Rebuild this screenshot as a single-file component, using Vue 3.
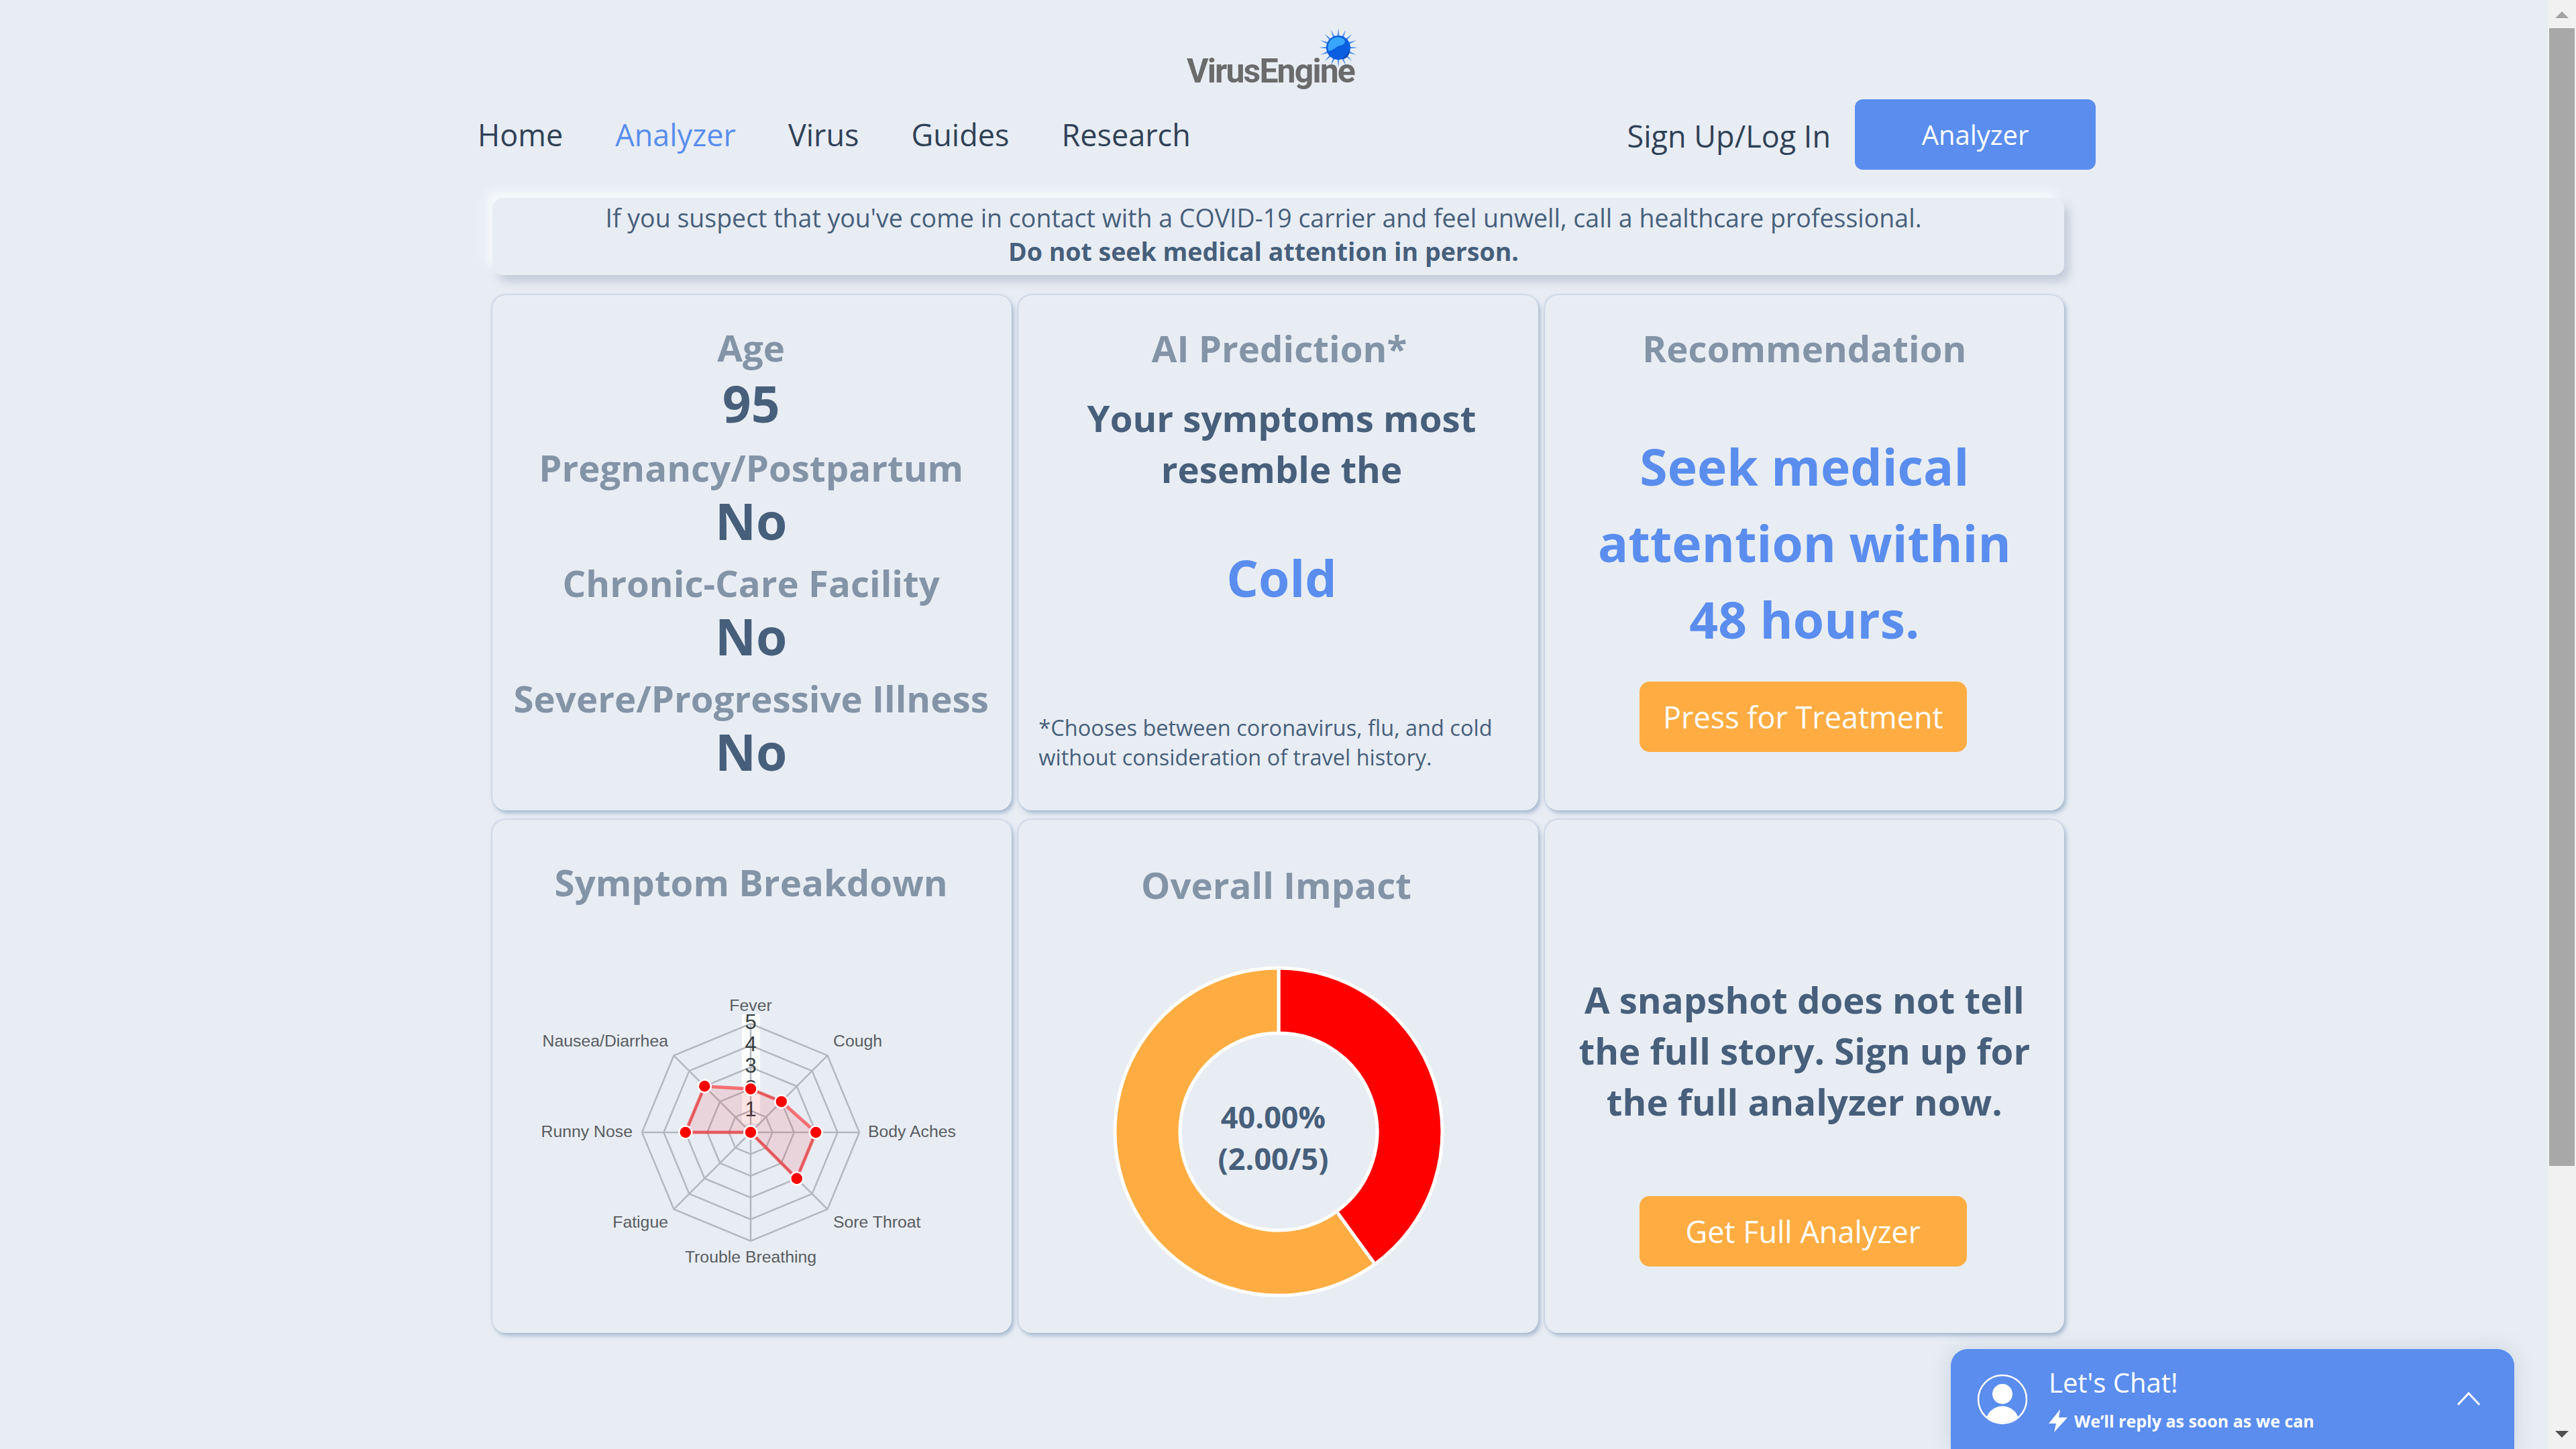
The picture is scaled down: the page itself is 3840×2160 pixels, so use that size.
<template>
  <div class="screen">
    <div class="page">
      <div class="logo-row">
        <div class="logo">
          <span class="logo-text">VirusEngine</span>
          <svg class="logo-ball" viewBox="0 0 64 64" width="64" height="64">
            <polygon v-for="s in spikes" :key="s.points" :points="s.points" fill="#4f8ff0" />
            <circle cx="32" cy="32" r="18" fill="#0a5ee0" />
            <path d="M17.5 37 A15 15 0 0 1 40 19 C44 23 41 28 35 29 C28 30 26 36 17.5 37 Z" fill="#38a5ff" />
            <path d="M36 49 C43 47 48 41 49 33 C50 43 44 50 36 49 Z" fill="#0742a8" />
          </svg>
        </div>
      </div>

      <nav class="nav">
        <div class="nav-links">
          <a v-for="item in links" :key="item" :class="['nav-link', { active: item === 'Analyzer' }]">{{ item }}</a>
        </div>
        <div class="nav-right">
          <a class="signin">Sign Up/Log In</a>
          <button class="btn-blue">Analyzer</button>
        </div>
      </nav>

      <div class="alert">
        <div>If you suspect that you've come in contact with a COVID-19 carrier and feel unwell, call a healthcare professional.</div>
        <div class="alert-strong">Do not seek medical attention in person.</div>
      </div>

      <div class="grid">
        <div class="card card-info">
          <div v-for="row in info" :key="row.label" class="info-row">
            <div class="info-label">{{ row.label }}</div>
            <div class="info-value">{{ row.value }}</div>
          </div>
        </div>

        <div class="card card-predict">
          <h4 class="title">AI Prediction*</h4>
          <div class="resemble">Your symptoms most<br />resemble the</div>
          <div class="result">Cold</div>
          <p class="footnote">*Chooses between coronavirus, flu, and cold<br />without consideration of travel history.</p>
        </div>

        <div class="card card-reco">
          <h4 class="title">Recommendation</h4>
          <div class="reco-text">Seek medical<br />attention within<br />48 hours.</div>
          <button class="btn-orange">Press for Treatment</button>
        </div>

        <div class="card card-radar">
          <h4 class="title">Symptom Breakdown</h4>
          <svg class="radar" viewBox="0 0 774 500" width="774" height="500">
            <rect x="372" y="112" width="27" height="163" fill="#fff" opacity="0.9" />
            <polygon v-for="r in rings" :key="r" :points="ringPoints(r)" fill="none" stroke="#b3b8c0" stroke-width="2.5" />
            <line v-for="(p, i) in axes" :key="i" :x1="cx" :y1="cy" :x2="p.x" :y2="p.y" stroke="#b3b8c0" stroke-width="2.5" />
            <text v-for="t in ticks" :key="t.v" :x="cx" :y="t.y" class="tick" text-anchor="middle" dominant-baseline="central">{{ t.v }}</text>
            <polygon :points="dataPoints" fill="rgba(255,0,0,0.1)" stroke="rgba(255,0,0,0.5)" stroke-width="5" />
            <circle v-for="(p, i) in dataDots" :key="i" :cx="p.x" :cy="p.y" r="9.5" fill="#f00" stroke="#fff" stroke-width="2.5" />
            <text v-for="l in radarLabels" :key="l.text" :x="l.x" :y="l.y" :text-anchor="l.anchor" class="axis-label" dominant-baseline="central">{{ l.text }}</text>
          </svg>
        </div>

        <div class="card card-donut">
          <h4 class="title">Overall Impact</h4>
          <svg class="donut" viewBox="0 0 774 520" width="774" height="520">
            <path :d="arcPath(0, 0.4)" fill="#f00" stroke="#fff" stroke-width="5" />
            <path :d="arcPath(0.4, 1)" fill="#ffad42" stroke="#fff" stroke-width="5" />
            <text x="380" y="227" class="donut-text" text-anchor="middle" dominant-baseline="central">40.00%</text>
            <text x="380" y="289" class="donut-text" text-anchor="middle" dominant-baseline="central">(2.00/5)</text>
          </svg>
        </div>

        <div class="card card-signup">
          <div class="signup-text">A snapshot does not tell<br />the full story. Sign up for<br />the full analyzer now.</div>
          <button class="btn-orange">Get Full Analyzer</button>
        </div>
      </div>

      <div class="chat">
        <svg class="chat-avatar" viewBox="0 0 76 76" width="76" height="76">
          <defs>
            <clipPath id="avatar-clip"><circle cx="38" cy="38" r="35" /></clipPath>
          </defs>
          <circle cx="38" cy="38" r="36" fill="none" stroke="#fff" stroke-width="2.5" />
          <circle cx="38" cy="30" r="15" fill="#fff" />
          <circle cx="38" cy="73" r="25" fill="#fff" clip-path="url(#avatar-clip)" />
        </svg>
        <div class="chat-body">
          <div class="chat-title">Let's Chat!</div>
          <div class="chat-sub">
            <svg viewBox="0 0 28 34" width="28" height="34">
              <path d="M17 0 L0 21 L11 21 L8 34 L28 12 L15 12 Z" fill="#fff" />
            </svg>
            <span>We’ll reply as soon as we can</span>
          </div>
        </div>
        <svg class="chat-chevron" viewBox="0 0 36 22" width="36" height="22">
          <path d="M2 20 L18 3 L34 20" fill="none" stroke="#fff" stroke-width="3" />
        </svg>
      </div>
    </div>

    <div class="scrollbar">
      <div class="arrow-up"></div>
      <div class="thumb"></div>
      <div class="arrow-down"></div>
    </div>
  </div>
</template>

<script setup>
const links = ['Home', 'Analyzer', 'Virus', 'Guides', 'Research']

const info = [
  { label: 'Age', value: '95' },
  { label: 'Pregnancy/Postpartum', value: 'No' },
  { label: 'Chronic-Care Facility', value: 'No' },
  { label: 'Severe/Progressive Illness', value: 'No' }
]

// logo spikes, tapered to a point
const spikes = Array.from({ length: 16 }, (_, i) => {
  const a = (i / 16) * Math.PI * 2
  const at = (r, off) => `${32 + Math.cos(a + off) * r},${32 + Math.sin(a + off) * r}`
  return { points: `${at(17, -0.09)} ${at(29, 0)} ${at(17, 0.09)}` }
})

// radar chart
const cx = 385
const cy = 288
const step = 32.4
const rings = [1, 2, 3, 4, 5]
const scores = [2, 2, 3, 3, 0, 0, 3, 3]

const point = (i, v) => {
  const a = (i / 8) * Math.PI * 2
  return { x: cx + Math.sin(a) * v * step, y: cy - Math.cos(a) * v * step }
}
const toAttr = (list) => list.map((p) => `${p.x},${p.y}`).join(' ')
const ringPoints = (r) => toAttr(scores.map((_, i) => point(i, r)))
const axes = scores.map((_, i) => point(i, 5))
const dataDots = scores.map((v, i) => point(i, v))
const dataPoints = toAttr(dataDots)

const ticks = [
  { v: 5, y: 123 },
  { v: 4, y: 156 },
  { v: 3, y: 188 },
  { v: 2, y: 221 },
  { v: 1, y: 253 }
]

const radarLabels = [
  { text: 'Fever', x: 385, y: 98, anchor: 'middle' },
  { text: 'Cough', x: 508, y: 151, anchor: 'start' },
  { text: 'Body Aches', x: 560, y: 286, anchor: 'start' },
  { text: 'Sore Throat', x: 508, y: 421, anchor: 'start' },
  { text: 'Trouble Breathing', x: 385, y: 473, anchor: 'middle' },
  { text: 'Fatigue', x: 262, y: 421, anchor: 'end' },
  { text: 'Runny Nose', x: 209, y: 286, anchor: 'end' },
  { text: 'Nausea/Diarrhea', x: 262, y: 151, anchor: 'end' }
]

// donut chart
const arcPath = (from, to) => {
  const dx = 388
  const dy = 250
  const R = 244
  const r = 147
  const a0 = from * Math.PI * 2
  const a1 = to * Math.PI * 2
  const pt = (rad, a) => `${dx + Math.sin(a) * rad} ${dy - Math.cos(a) * rad}`
  const large = to - from > 0.5 ? 1 : 0
  return `M${pt(R, a0)} A${R} ${R} 0 ${large} 1 ${pt(R, a1)} L${pt(r, a1)} A${r} ${r} 0 ${large} 0 ${pt(r, a0)} Z`
}
</script>

<style>
html,
body {
  margin: 0;
  background: #e8edf4;
}
</style>

<style scoped>
.screen {
  display: flex;
  width: 3840px;
  height: 2160px;
  overflow: hidden;
  background: #e8edf4;
  font-family: "Open Sans", "Noto Sans", sans-serif;
  color: #475f7b;
}

.page {
  position: relative;
  width: 3798px;
  height: 2160px;
  padding-left: 712px;
  box-sizing: border-box;
}

.logo-row {
  height: 148px;
  width: 2364px;
  display: flex;
  justify-content: center;
  align-items: flex-start;
}

.logo {
  position: relative;
  padding-top: 76px;
}

.logo-text {
  display: block;
  font-family: Roboto, "Liberation Sans", sans-serif;
  font-weight: 700;
  font-size: 50px;
  line-height: 60px;
  letter-spacing: -1.9px;
  color: #6b6b6b;
}

.logo-ball {
  position: absolute;
  top: 39px;
  right: -8px;
}

.nav {
  display: flex;
  justify-content: space-between;
  align-items: center;
  width: 2412px;
  height: 105px;
}

.nav-links {
  display: flex;
  gap: 78px;
  font-size: 45px;
  color: #304156;
}

.nav-link.active {
  color: #5a8dee;
}

.nav-right {
  display: flex;
  align-items: center;
  gap: 36px;
}

.signin {
  font-size: 45px;
  color: #304156;
  padding-top: 4px;
}

.btn-blue {
  width: 359px;
  height: 105px;
  border: none;
  border-radius: 12px;
  background: #5a8dee;
  color: #fff;
  font-family: inherit;
  font-size: 40px;
}

.alert {
  margin: 42px 0 0 22px;
  width: 2343px;
  height: 115px;
  box-sizing: border-box;
  padding: 5px 44px 0 0;
  border-radius: 15px;
  text-align: center;
  font-size: 37.5px;
  line-height: 50px;
  background: #e8edf4;
  box-shadow: -10px -10px 14px #f5f8fa, 8px 10px 14px #c3ccda;
}

.alert-strong {
  font-weight: 700;
}

.grid {
  display: grid;
  grid-template-columns: repeat(3, 1fr);
  grid-template-rows: 768px 765px;
  gap: 14px 10px;
  margin: 30px 0 0 22px;
  width: 2343px;
}

.card {
  display: flex;
  flex-direction: column;
  align-items: center;
  box-sizing: border-box;
  border-radius: 20px;
  background: #e8edf4;
  box-shadow: 3px 4px 6px rgba(110, 140, 175, 0.55), -1px -1px 3px rgba(130, 155, 185, 0.35);
}

.title {
  margin: 0;
  font-size: 54.6px;
  line-height: 76px;
  font-weight: 700;
  color: #8494a7;
}

.card-info {
  padding: 42px 3px 0 0;
}

.info-row {
  display: flex;
  flex-direction: column;
  align-items: center;
  margin-bottom: 14px;
}

.info-row:first-child {
  margin-bottom: 17px;
}

.info-row:first-child .info-label {
  margin-bottom: 4px;
}

.info-label {
  font-size: 54.6px;
  line-height: 72px;
  font-weight: 700;
  color: #8494a7;
}

.info-value {
  font-size: 75px;
  line-height: 86px;
  font-weight: 700;
}

.card-predict {
  padding-top: 41px;
}

.card-predict .title {
  margin-left: 3px;
}

.resemble {
  margin: 28px 0 0 10px;
  font-size: 54.6px;
  line-height: 76px;
  font-weight: 700;
  text-align: center;
}

.result {
  margin: 69px 0 0 10px;
  font-size: 75px;
  line-height: 110px;
  font-weight: 700;
  color: #5a8dee;
}

.footnote {
  margin: auto 0 0;
  padding: 0 20px 57px 30px;
  width: 100%;
  box-sizing: border-box;
  font-size: 32.5px;
  line-height: 44px;
}

.card-reco {
  padding-top: 41px;
}

.reco-text {
  margin-top: 81px;
  font-size: 75px;
  line-height: 114px;
  font-weight: 700;
  text-align: center;
  color: #5a8dee;
}

.btn-orange {
  width: 488px;
  height: 105px;
  margin-right: 4px;
  border: none;
  border-radius: 15px;
  background: #ffad42;
  color: #fff;
  font-family: inherit;
  font-size: 45px;
}

.card-reco .btn-orange {
  margin-top: 36px;
}

.card-radar {
  padding-top: 55px;
}

.card-radar .title {
  margin-right: 3px;
}

.radar {
  margin-top: 47px;
}

.tick {
  font-family: "Liberation Sans", sans-serif;
  font-size: 31px;
  fill: #373d3f;
}

.axis-label {
  font-family: "Liberation Sans", sans-serif;
  font-size: 24.8px;
  fill: #595c60;
}

.card-donut {
  padding-top: 59px;
}

.card-donut .title {
  margin-right: 6px;
}

.donut {
  margin-top: 80px;
}

.donut-text {
  font-family: "Open Sans", sans-serif;
  font-size: 45px;
  font-weight: 700;
  fill: #475f7b;
}

.card-signup {
  padding-top: 230px;
}

.signup-text {
  font-size: 54.6px;
  line-height: 76px;
  font-weight: 700;
  text-align: center;
}

.card-signup .btn-orange {
  margin-top: 103px;
}

.chat {
  position: absolute;
  right: 50px;
  bottom: 0;
  width: 840px;
  height: 149px;
  display: flex;
  align-items: flex-start;
  box-sizing: border-box;
  padding: 37px 50px 0 39px;
  border-radius: 25px 25px 0 0;
  background: #5a8dee;
  color: #fff;
  box-shadow: 0 0 30px rgba(110, 130, 165, 0.25);
}

.chat-body {
  margin-left: 31px;
  flex: 1;
}

.chat-title {
  margin-top: -12px;
  font-size: 40px;
  line-height: 50px;
}

.chat-sub {
  display: flex;
  align-items: center;
  gap: 10px;
  margin-top: 15px;
  font-size: 25px;
  font-weight: 700;
}

.chat-chevron {
  margin-top: 26px;
}

.scrollbar {
  position: relative;
  width: 42px;
  height: 2160px;
  background: #f1f1f1;
}

.arrow-up {
  width: 0;
  margin: 17px auto 0;
  border-left: 10px solid transparent;
  border-right: 10px solid transparent;
  border-bottom: 10px solid #a3a3a3;
}

.thumb {
  margin: 15px 2px 0;
  height: 1696px;
  background: #a8a8a8;
}

.arrow-down {
  width: 0;
  margin: 395px auto 0;
  border-left: 10px solid transparent;
  border-right: 10px solid transparent;
  border-top: 10px solid #505050;
}
</style>
